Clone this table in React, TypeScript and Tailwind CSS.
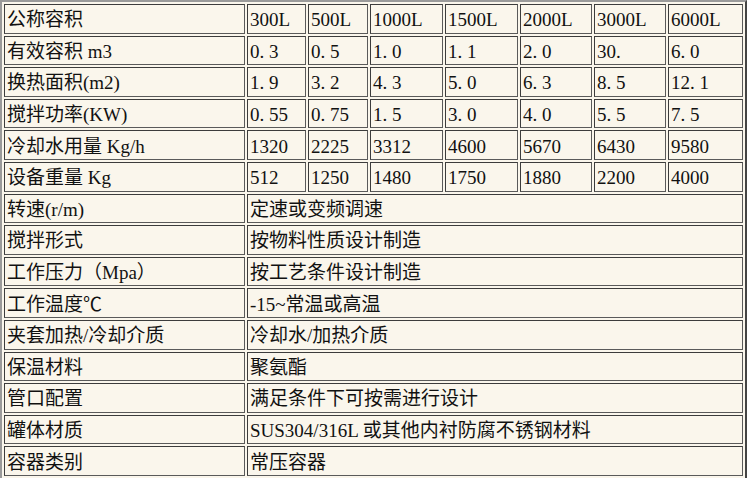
const sizes = ["300L", "500L", "1000L", "1500L", "2000L", "3000L", "6000L"];

const specRows: [string, string[]][] = [
  ["有效容积 m3", ["0. 3", "0. 5", "1. 0", "1. 1", "2. 0", "30.", "6. 0"]],
  ["换热面积(m2)", ["1. 9", "3. 2", "4. 3", "5. 0", "6. 3", "8. 5", "12. 1"]],
  ["搅拌功率(KW)", ["0. 55", "0. 75", "1. 5", "3. 0", "4. 0", "5. 5", "7. 5"]],
  ["冷却水用量 Kg/h", ["1320", "2225", "3312", "4600", "5670", "6430", "9580"]],
  ["设备重量 Kg", ["512", "1250", "1480", "1750", "1880", "2200", "4000"]],
];

const textRows: [string, string][] = [
  ["转速(r/m)", "定速或变频调速"],
  ["搅拌形式", "按物料性质设计制造"],
  ["工作压力（Mpa）", "按工艺条件设计制造"],
  ["工作温度℃", "-15~常温或高温"],
  ["夹套加热/冷却介质", "冷却水/加热介质"],
  ["保温材料", "聚氨酯"],
  ["管口配置", "满足条件下可按需进行设计"],
  ["罐体材质", "SUS304/316L 或其他内衬防腐不锈钢材料"],
  ["容器类别", "常压容器"],
];

const cell =
  "h-[29.6px] border border-t-[#3c3c3c] border-l-[#3c3c3c] border-b-[#5a5a5a] border-r-[#5a5a5a] px-[2px] pt-[2px] pb-0 align-middle whitespace-nowrap leading-none";

export default function App() {
  return (
    <div className="min-h-screen bg-white">
      <table
        className="w-[747px] table-fixed border-separate border-spacing-[2px] border-2 border-t-[#9a9a9a] border-l-[#9a9a9a] border-b-[#444] border-r-[#444] bg-[#faf6ec] text-[19px] text-[#111]"
        style={{ fontFamily: '"Liberation Serif", "Noto Sans CJK SC", serif' }}
      >
        <colgroup>
          <col className="w-[241px]" />
          <col className="w-[59px]" />
          <col className="w-[60px]" />
          <col className="w-[73px]" />
          <col className="w-[73px]" />
          <col className="w-[72px]" />
          <col className="w-[72px]" />
          <col className="w-[75px]" />
        </colgroup>
        <tbody>
          <tr>
            <td className={cell}>公称容积</td>
            {sizes.map((s) => (
              <td key={s} className={cell}>
                {s}
              </td>
            ))}
          </tr>
          {specRows.map(([label, vals]) => (
            <tr key={label}>
              <td className={cell}>{label}</td>
              {vals.map((v, i) => (
                <td key={i} className={cell}>
                  {v}
                </td>
              ))}
            </tr>
          ))}
          {textRows.map(([label, val]) => (
            <tr key={label}>
              <td className={cell}>{label}</td>
              <td className={cell} colSpan={7}>
                {val}
              </td>
            </tr>
          ))}
        </tbody>
      </table>
    </div>
  );
}
